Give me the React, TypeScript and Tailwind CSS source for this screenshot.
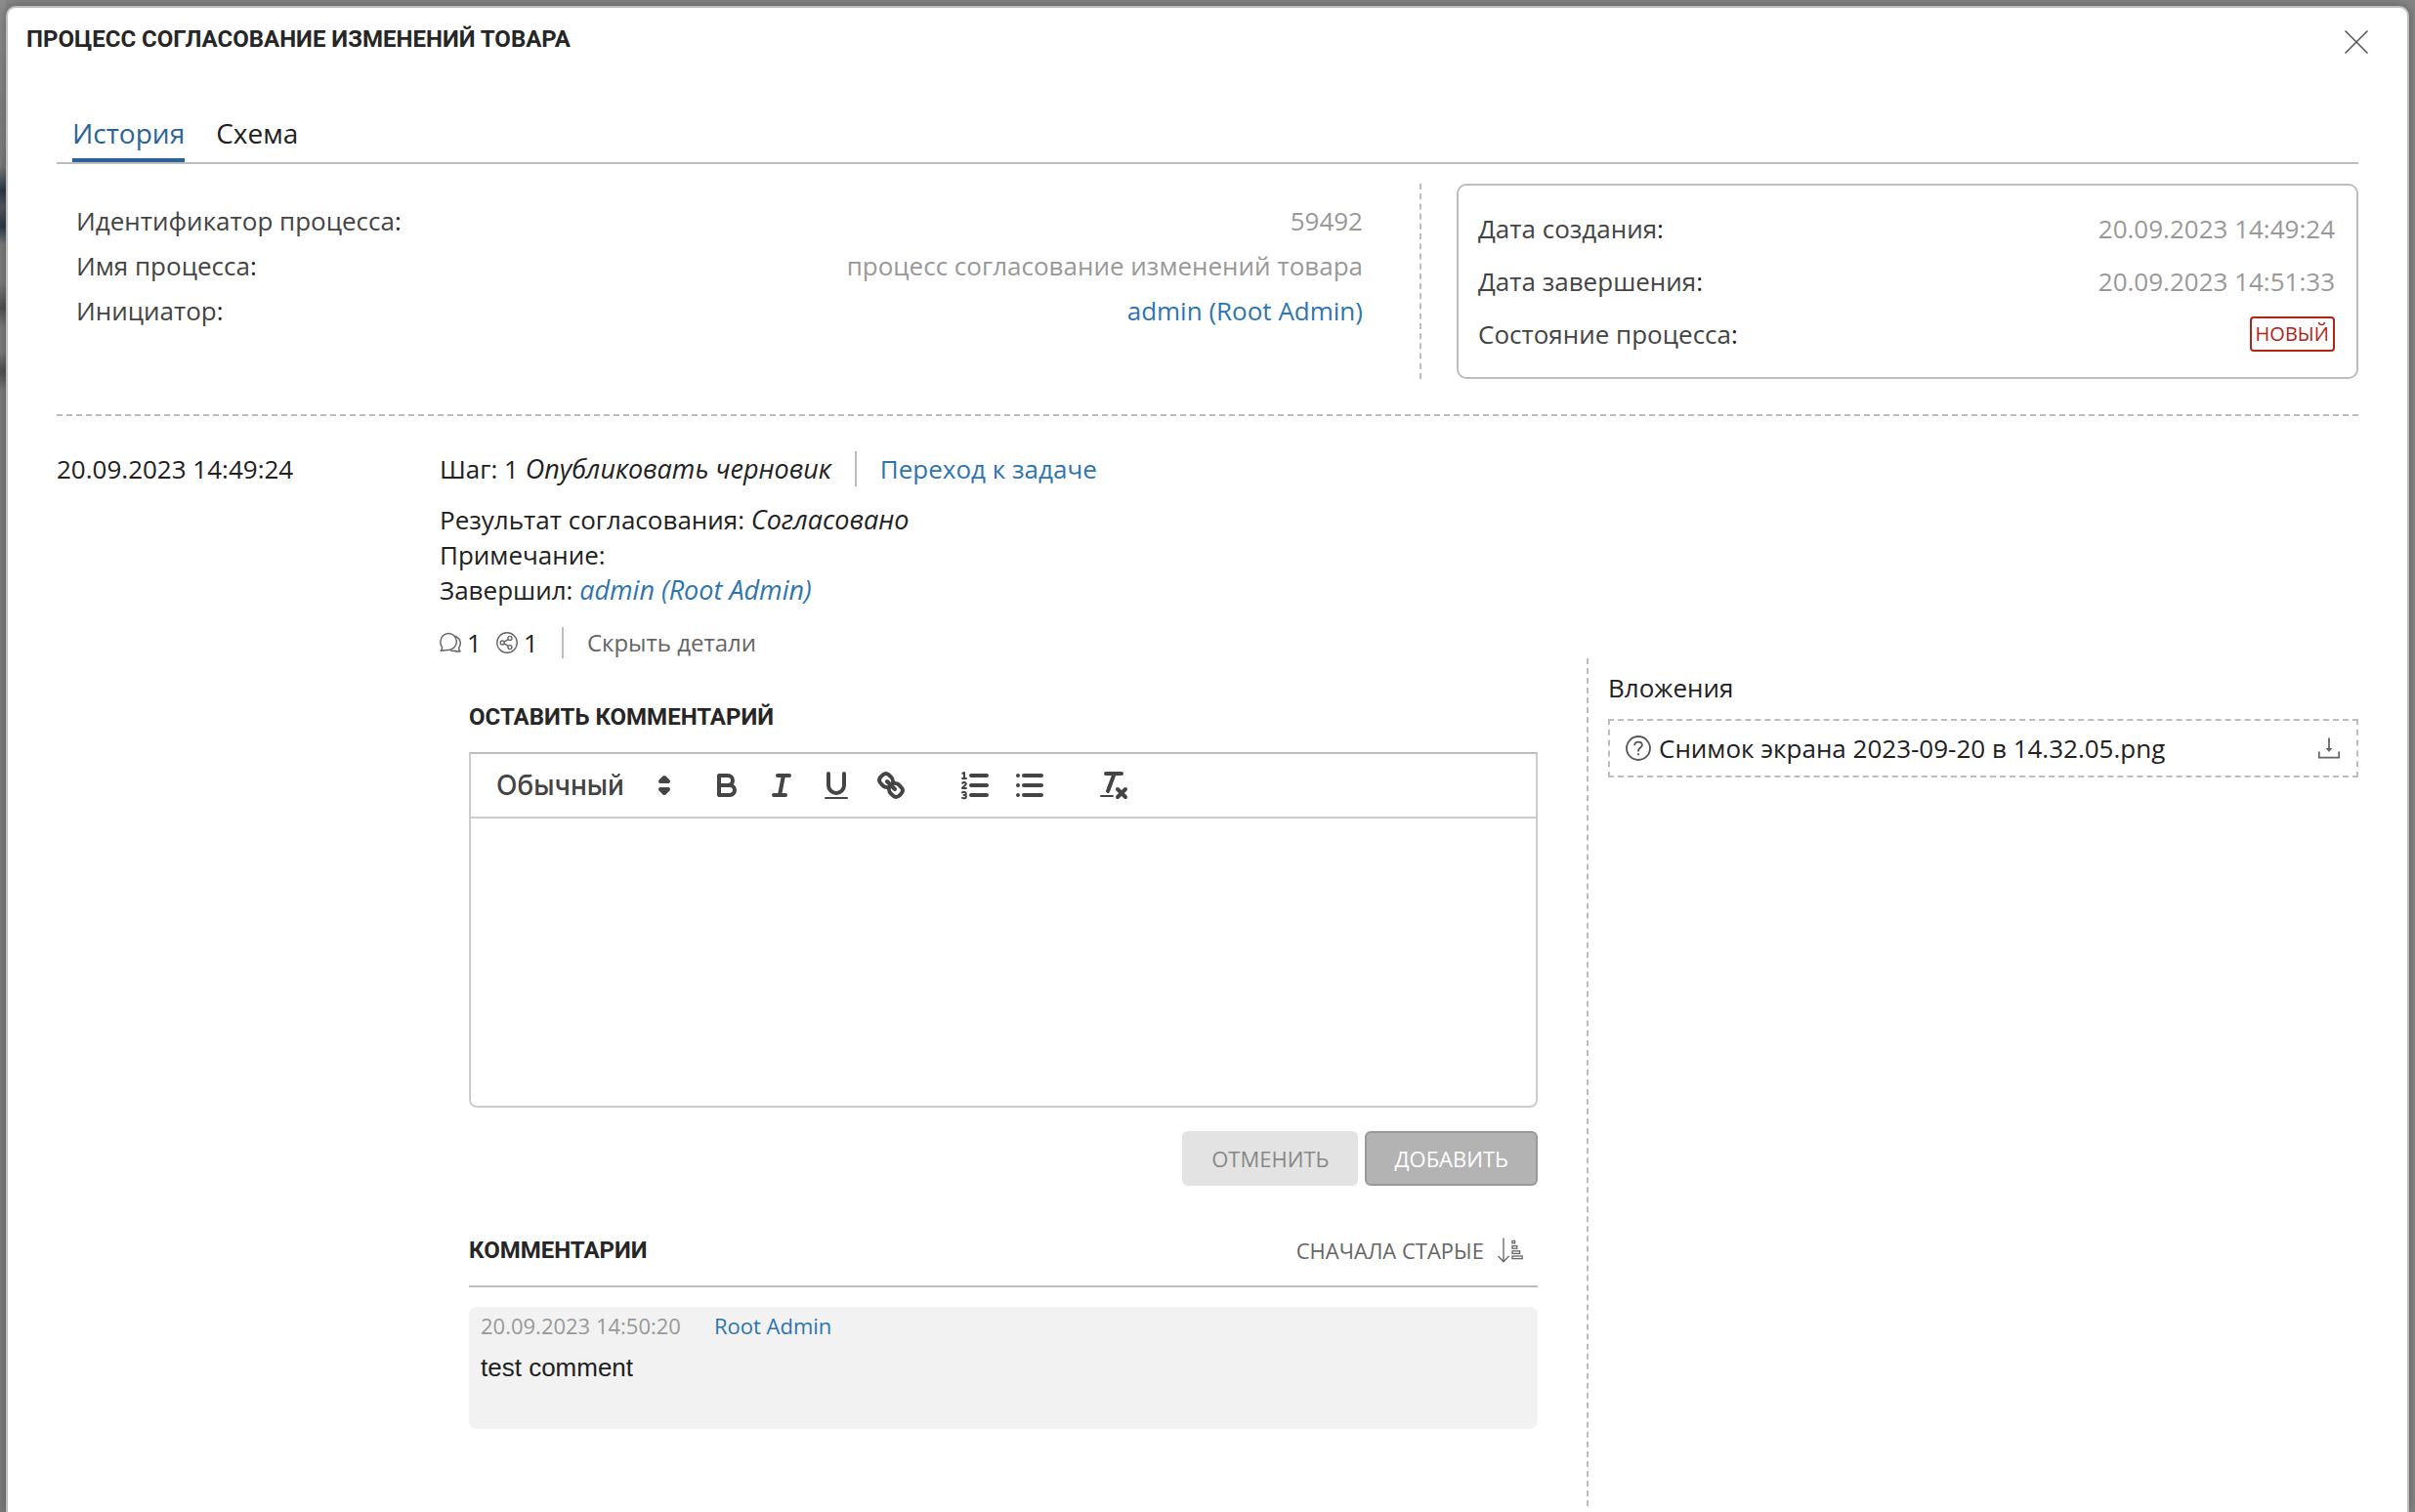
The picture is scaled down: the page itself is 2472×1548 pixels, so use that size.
import React from "react";

const STROKE = "#444444";

function CommentsIcon() {
  return (
    <svg viewBox="0 0 24 24" className="size-[22px]" fill="none" stroke="#666666" strokeWidth="1.6" strokeLinejoin="round" aria-hidden="true">
      <path d="M1.2 20.9C2.5 19.6 2.9 18.3 2.8 17A8.6 8.6 0 0 1 1 10.8C1 6 4.8 1.6 10 1.6S19 6 19 10.8 15 20 10 20.2C7 20.3 4 20.9 1.2 20.9Z" />
      <path d="M17.2 4.6C20.8 6 23.2 9.2 23.2 12.8C23.2 15 22.4 16.6 21.4 17.9C21.5 19.2 22 20.6 23 21.6C20.8 22.2 18.6 21.8 17 21C15.4 21.5 13.4 21.4 11.8 20.3" />
    </svg>
  );
}

function ShareIcon() {
  return (
    <svg viewBox="0 0 24 24" className="size-[22px]" fill="none" stroke="#666666" strokeWidth="1.5" aria-hidden="true">
      <circle cx="12" cy="12" r="11.2" />
      <circle cx="6.8" cy="12" r="2.2" />
      <circle cx="15.2" cy="7" r="2.2" />
      <circle cx="15.2" cy="17" r="2.2" />
      <path d="M8.8 11L13.2 8.3M8.8 13L13.2 15.7" />
    </svg>
  );
}

function QuestionIcon() {
  return (
    <svg viewBox="0 0 26 26" className="size-[26px] shrink-0" fill="none" stroke="#555555" strokeWidth="1.8" aria-hidden="true">
      <circle cx="13" cy="13" r="12" />
      <path d="M9.2 10.2C9.2 7.9 10.8 6.6 13 6.6S16.9 8 16.9 10C16.9 12.4 13 12.8 13 15.6V16.4" />
      <path d="M13 18.2V20.2" />
    </svg>
  );
}

function DownloadIcon() {
  return (
    <svg viewBox="0 0 24 24" className="size-6" fill="none" stroke="#666666" strokeWidth="1.8" aria-hidden="true">
      <path d="M1.8 15.5V21.6H22.2V15.5" />
      <path d="M12 1.5V14" />
      <path d="M8.6 12H15.4L12 16Z" fill="#666666" stroke="none" />
    </svg>
  );
}

function SortIcon() {
  return (
    <svg viewBox="0 0 26 26" className="size-[26px]" fill="none" stroke="#666666" strokeWidth="1.3" aria-hidden="true">
      <path d="M6 0.5V24.5M0.5 19L6 24.7L11.5 19" />
      <rect x="15" y="3.4" width="2.6" height="2.4" />
      <rect x="15" y="8.6" width="4.8" height="2.6" />
      <rect x="15" y="13.8" width="7.6" height="2.6" />
      <rect x="15" y="19" width="10.2" height="2.6" />
    </svg>
  );
}

function Glyph({ children }: { children: React.ReactNode }) {
  return (
    <svg viewBox="0 0 18 18" className="size-9" fill="none" stroke={STROKE} strokeWidth="2" strokeLinecap="round" strokeLinejoin="round" aria-hidden="true">
      {children}
    </svg>
  );
}

function ToolButton({ label, children }: { label: string; children: React.ReactNode }) {
  return (
    <button type="button" aria-label={label} className="flex h-12 w-14 items-center justify-center">
      <Glyph>{children}</Glyph>
    </button>
  );
}

function Toolbar() {
  return (
    <div className="flex items-center border-2 border-[#cccccc] border-t-[#bdbdbd] py-2 pl-[26px]">
      <div className="relative mr-[18px]">
        <select aria-label="Стиль текста" className="h-12 w-[190px] appearance-none bg-transparent font-['Inter',sans-serif] text-[28px] font-medium text-[#444444]">
          <option>Обычный</option>
          <option>Заголовок</option>
        </select>
        <svg viewBox="0 0 18 18" className="pointer-events-none absolute top-1.5 right-0 size-9" fill={STROKE} stroke={STROKE} strokeWidth="2" strokeLinejoin="round" aria-hidden="true">
          <polygon points="7 11 9 13 11 11" />
          <polygon points="7 7 9 5 11 7" />
        </svg>
      </div>
      <div className="mr-[30px] flex">
        <ToolButton label="Полужирный">
          <path d="M5,4H9.5A2.5,2.5,0,0,1,12,6.5v0A2.5,2.5,0,0,1,9.5,9H5V4Z" />
          <path d="M5,9h5.5A2.5,2.5,0,0,1,13,11.5v0A2.5,2.5,0,0,1,10.5,14H5V9Z" />
        </ToolButton>
        <ToolButton label="Курсив">
          <path d="M7 4H13M5 14H11M8 14L10 4" />
        </ToolButton>
        <ToolButton label="Подчёркнутый">
          <path d="M5,3V9a4.012,4.012,0,0,0,4,4H9a4.012,4.012,0,0,0,4-4V3" />
          <rect x="3" y="15" width="12" height="1" rx="0.5" fill={STROKE} stroke="none" />
        </ToolButton>
        <ToolButton label="Ссылка">
          <path d="M7 7L11 11" />
          <path d="M8.9,4.577a3.476,3.476,0,0,1,.36,4.679A3.476,3.476,0,0,1,4.577,8.9C3.185,7.5,2.035,6.4,4.217,4.217S7.5,3.185,8.9,4.577Z" />
          <path d="M13.423,9.1a3.476,3.476,0,0,0-4.679-.36,3.476,3.476,0,0,0,.36,4.679c1.392,1.392,2.5,2.542,4.679.36S14.815,10.5,13.423,9.1Z" />
        </ToolButton>
      </div>
      <div className="mr-[30px] flex">
        <ToolButton label="Нумерованный список">
          <path d="M7 4H15M7 9H15M7 14H15" />
          <path strokeWidth="1" d="M2.5 5.5H4.5M3.5 5.5V2.5L2.7 2.9" />
          <path strokeWidth="1" d="M2.6 7.9C2.9 7.3 4.4 7.3 4.4 8.3C4.4 9.1 2.7 9.6 2.5 10.5H4.5" />
          <path strokeWidth="1" d="M2.5 12.7C3 12.3 4.4 12.3 4.4 13.2C4.4 13.9 3.6 14 3.3 14C3.6 14 4.5 14.1 4.5 14.9C4.5 15.8 3 15.8 2.5 15.4" />
        </ToolButton>
        <ToolButton label="Маркированный список">
          <path d="M6 4H15M6 9H15M6 14H15M3 4H3.01M3 9H3.01M3 14H3.01" />
        </ToolButton>
      </div>
      <ToolButton label="Очистить форматирование">
        <path d="M5 3H13M6 12L9.35 3" />
        <path d="M11 11L15 15M15 11L11 15" />
        <rect x="2" y="14" width="7" height="1" rx="0.5" fill={STROKE} stroke="none" />
      </ToolButton>
    </div>
  );
}

function InfoRow({ label, tall, children }: { label: string; tall?: boolean; children: React.ReactNode }) {
  return (
    <div className={tall ? "flex h-[54px] items-center justify-between" : "flex h-[46px] items-center justify-between"}>
      <dt className="text-[#444444]">
        {label}
        <span className="text-[#212121]">:</span>
      </dt>
      <dd className="text-[#999999]">{children}</dd>
    </div>
  );
}

const heading = "font-['Roboto',sans-serif] text-2xl leading-8 font-bold text-[#262626] uppercase";
const link = "text-[#2e75b0]";

export default function App() {
  return (
    <div className="flex min-h-screen flex-col bg-[#858585] bg-[linear-gradient(to_bottom,#8c8c8c_0px,#7c7c7c_170px,#2c3a46_195px,#55585c_212px,#2c3a46_232px,#7c7c7c_250px,#7c7c7c_290px,#505050_315px,#7c7c7c_335px,#7c7c7c_360px,#505050_380px,#7c7c7c_400px)] bg-[length:6px_100%] bg-no-repeat px-1.5 pt-1.5 font-['Open_Sans','Noto_Sans',sans-serif] text-[26px] leading-9 text-[#212121]">
      <section role="dialog" aria-labelledby="dialog-title" className="flex flex-1 flex-col rounded-t-[10px] border-2 border-b-0 border-[#bdbdbd] bg-white shadow-[0_0_12px_rgba(0,0,0,0.3)]">
        <header className="flex items-start justify-between pt-4 pr-[33px] pl-[19px]">
          <h1 id="dialog-title" className={heading}>Процесс согласование изменений товара</h1>
          <button type="button" aria-label="Закрыть" className="flex size-[38px] items-center justify-center">
            <svg viewBox="0 0 24 24" className="size-6" fill="none" stroke="#555555" strokeWidth="1.5" aria-hidden="true">
              <path d="M0.5 0.5L23.5 23.5M23.5 0.5L0.5 23.5" />
            </svg>
          </button>
        </header>

        <main className="flex flex-1 flex-col px-[50px] pb-1.5">
          <div role="tablist" className="mt-[55px] flex gap-8 border-b-2 border-[#bdbdbd] px-4 text-[28px] leading-[38px]">
            <button type="button" role="tab" aria-selected="true" className="border-b-4 border-[#2a6496] pb-[7px] text-[#2a6496]">История</button>
            <button type="button" role="tab" aria-selected="false" className="border-b-4 border-transparent pb-[7px]">Схема</button>
          </div>

          <div className="mt-5 grid grid-cols-[1397fr_923fr] gap-9">
            <dl className="border-r-2 border-dashed border-[#bdbdbd] pt-[15px] pr-[58px] pl-5">
              <InfoRow label="Идентификатор процесса">59492</InfoRow>
              <InfoRow label="Имя процесса">процесс согласование изменений товара</InfoRow>
              <InfoRow label="Инициатор"><a href="#admin" className={link}>admin (Root Admin)</a></InfoRow>
            </dl>
            <dl className="rounded-[10px] border-2 border-[#bdbdbd] py-[17px] pr-[22px] pl-5">
              <InfoRow tall label="Дата создания">20.09.2023 14:49:24</InfoRow>
              <InfoRow tall label="Дата завершения">20.09.2023 14:51:33</InfoRow>
              <InfoRow tall label="Состояние процесса">
                <span className="block rounded-sm border-2 border-[#b02418] px-1 text-xl leading-8 text-[#b02418]">НОВЫЙ</span>
              </InfoRow>
            </dl>
          </div>
          <div className="mt-9 border-b-2 border-dashed border-[#bdbdbd]" />

          <article className="grid flex-1 grid-cols-[392fr_1964fr] pt-9">
            <time>20.09.2023 14:49:24</time>
            <div className="flex flex-col">
              <div className="flex items-center">
                <h2>Шаг: 1 <i className="text-[27px]">Опубликовать черновик</i></h2>
                <span className="mx-6 h-9 w-0.5 bg-[#bdbdbd]" />
                <a href="#task" className={link}>Переход к задаче</a>
              </div>
              <div className="mt-4">
                <p>Результат согласования: <i className="text-[27px]">Согласовано</i></p>
                <p>Примечание:</p>
                <p>Завершил: <a href="#admin" className="text-[27px] text-[#2e75b0] italic">admin (Root Admin)</a></p>
              </div>
              <div className="mt-5 flex h-8 items-center">
                <CommentsIcon />
                <span className="ml-1.5 w-[30px]">1</span>
                <ShareIcon />
                <span className="ml-1.5">1</span>
                <span className="mx-6 h-8 w-0.5 bg-[#bdbdbd]" />
                <button type="button" className="text-2xl text-[#666666]">Скрыть детали</button>
              </div>

              <div className="grid flex-1 grid-cols-[1174fr_790fr]">
                <div className="pr-[50px] pl-[30px]">
                  <h3 className={`${heading} mt-11`}>Оставить комментарий</h3>
                  <div className="mt-5">
                    <Toolbar />
                    <textarea aria-label="Текст комментария" className="block h-[296px] w-full resize-none rounded-b-lg border-2 border-t-0 border-[#cccccc] p-6" />
                  </div>
                  <div className="mt-6 flex justify-end gap-[7px] text-[22px] leading-[30px]">
                    <button type="button" className="rounded-md bg-[#e3e3e3] px-[30px] py-[13px] text-[#888888] uppercase">Отменить</button>
                    <button type="button" className="rounded-md border-2 border-[#999999] bg-[#b3b3b3] px-7 py-[11px] text-white uppercase">Добавить</button>
                  </div>
                  <div className="mt-[50px] flex items-center justify-between border-b-2 border-[#bdbdbd] pr-[15px] pb-5">
                    <h3 className={heading}>Комментарии</h3>
                    <button type="button" className="flex items-center gap-3.5 text-[22px] leading-8 text-[#666666] uppercase">
                      Сначала старые
                      <SortIcon />
                    </button>
                  </div>
                  <div className="mt-5 rounded-lg bg-[#f2f2f2] px-3 pt-1 pb-[45px]">
                    <div className="flex gap-[34px] text-[22px] leading-[30px]">
                      <time className="text-[#999999]">20.09.2023 14:50:20</time>
                      <a href="#root-admin" className={link}>Root Admin</a>
                    </div>
                    <p className="mt-2.5 font-['Liberation_Sans',sans-serif]">test comment</p>
                  </div>
                </div>

                <aside className="border-l-2 border-dashed border-[#bdbdbd] pt-3 pl-5">
                  <h3>Вложения</h3>
                  <div className="mt-3.5 flex h-[60px] items-center border-2 border-dashed border-[#bdbdbd] px-4">
                    <QuestionIcon />
                    <span className="ml-2">Снимок экрана 2023-09-20 в 14.32.05.png</span>
                    <button type="button" aria-label="Скачать" className="ml-auto"><DownloadIcon /></button>
                  </div>
                </aside>
              </div>
            </div>
          </article>
        </main>
      </section>
    </div>
  );
}
